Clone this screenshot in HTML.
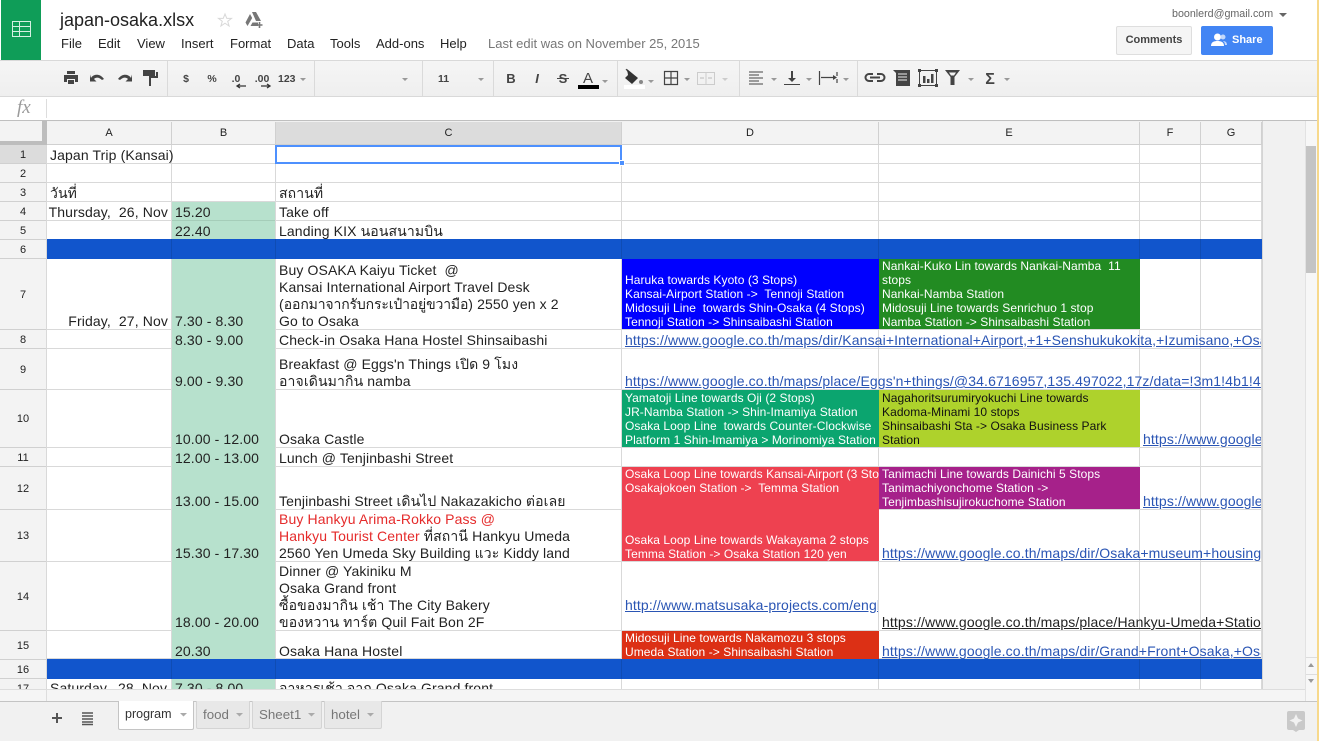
<!DOCTYPE html>
<html><head><meta charset="utf-8"><title>japan-osaka.xlsx</title>
<style>
html,body{margin:0;padding:0;width:1319px;height:741px;overflow:hidden;background:#fff;font-family:"Liberation Sans",Arial,"Noto Sans CJK SC",sans-serif}
div{position:absolute;box-sizing:border-box}
.a{white-space:pre}
#grid{left:0;top:145px;width:1262px;height:544px;overflow:hidden;background:#fff}
#g{left:0;top:-145px;width:1262px;height:741px}
.v{top:145px;width:1px;height:544px;background:#d9d9d9}
.h{left:47px;width:1215px;height:1px;background:#d9d9d9}
.t{font-size:14px;letter-spacing:.12px;line-height:17px;color:#222;white-space:pre;overflow:visible}
.s{font-size:12px;letter-spacing:.07px;line-height:14px;color:#fff;white-space:pre;overflow:hidden;padding-left:3px}
.r{text-align:right;width:122px;left:46px}
.l{font-size:14px;letter-spacing:.12px;line-height:17px;color:#2a55b4;text-decoration:underline;white-space:pre;overflow:hidden}
.rh{left:0;width:46px;background:#f3f3f3;border-bottom:1px solid #d0d0d0;font-size:11px;color:#222;text-align:center;display:flex;align-items:center;justify-content:center;padding-top:1px}
.ch{top:122px;height:23px;background:#f3f3f3;border-right:1px solid #d0d0d0;border-bottom:1px solid #d0d0d0;font-size:11px;color:#222;text-align:center;line-height:22px}
.tab{top:701px;height:28px;background:#e8e8e8;border:1px solid #d4d4d4;border-top:0;border-radius:0 0 2px 2px;font-size:13.33px;color:#777;line-height:27px;padding-left:6px}
.m{top:36px;font-size:13px;line-height:16px;color:#222;white-space:pre}
</style></head><body>

<!-- header -->
<div style="left:1px;top:0;width:40px;height:60px;background:#0f9d58"></div>
<svg style="position:absolute;left:12px;top:21px" width="20" height="17"><rect x=".5" y=".5" width="18" height="15" fill="none" stroke="#d5f0e2"/><path d="M1 5.500h18M1 10.500h18M7.500 1v15" stroke="#d5f0e2" fill="none"/></svg>
<div class="a" style="left:60px;top:9px;font-size:18px;line-height:22px;color:#222">japan-osaka.xlsx</div>
<svg style="position:absolute;left:216px;top:10px" width="48" height="20"><path d="M9 4l1.800 4.400h4.700l-3.800 2.900 1.400 4.700L9 13.200 4.900 16l1.400-4.700-3.800-2.900h4.700z" fill="none" stroke="#d8d8d8"/><path d="M36 2h4l5 9h-5zM34 4l2.200 4-4.700 8-2-3.500zM34.500 16l2-3.500h5.500v3.500z" fill="#777"/><path d="M43.500 12v6M40.500 15h6" stroke="#777" stroke-width="1.600"/></svg>
<div class="m" style="left:61px">File</div><div class="m" style="left:98px">Edit</div><div class="m" style="left:137px">View</div><div class="m" style="left:181px">Insert</div><div class="m" style="left:230px">Format</div><div class="m" style="left:287px">Data</div><div class="m" style="left:330px">Tools</div><div class="m" style="left:376px">Add-ons</div><div class="m" style="left:440px">Help</div>
<div class="m" style="left:488px;color:#777">Last edit was on November 25, 2015</div>
<div class="a" style="left:1172px;top:8px;font-size:10.7px;line-height:13px;color:#666">boonlerd@gmail.com</div>
<svg style="position:absolute;left:1279px;top:12px" width="9" height="6"><path d="M0 1h8L4 5z" fill="#666"/></svg>
<div style="left:1116px;top:26px;width:76px;height:29px;background:#f5f5f5;border:1px solid #dedede;border-radius:2px;font-size:11px;font-weight:bold;color:#444;text-align:center;line-height:27px">Comments</div>
<div style="left:1201px;top:26px;width:72px;height:29px;background:#4285f4;border-radius:2px;font-size:11px;font-weight:bold;color:#fff;line-height:28px;padding-left:31px">Share</div>
<svg style="position:absolute;left:1210px;top:32px" width="18" height="16"><circle cx="7.500" cy="5" r="3.500" fill="#fff"/><path d="M1 14c0-4 3-5 6.500-5s6.500 1 6.500 5z" fill="#fff"/><circle cx="13" cy="5" r="2.500" fill="#c3d8fb"/><path d="M13 9c2 0 4 1 4 4h-2c0-2-1-3-2-4z" fill="#c3d8fb"/></svg>

<!-- toolbar -->
<div style="left:0;top:60px;width:1317px;height:37px;background:linear-gradient(#f5f5f5,#efefef);border-top:1px solid #d9d9d9;border-bottom:1px solid #d9d9d9"></div>
<svg style="position:absolute;left:0;top:60px" width="1317" height="37" font-family="Liberation Sans,Arial,sans-serif">
<g stroke="#dadada"><path d="M167.500 1v35M314.500 1v35M422.500 1v35M493.500 1v35M617.500 1v35M739.500 1v35M857.500 1v35"/></g>
<g fill="#444">
<path d="M67 11h8v3h-8zM64 15h14v7h-3v-3h-8v3h-3zM68 20h6v4h-6z"/>
<path d="M91 18c2-4 9-5 13 1l-2 1c-3-3-6-3-8-1l2.500 2.500H90v-7z"/>
<path d="M131 18c-2-4-9-5-13 1l2 1c3-3 6-3 8-1l-2.500 2.500H132v-7z"/>
<path d="M143 10h12v6h-12z"/>
<path d="M156 12h2v6h-7v8h-2v-10h7z"/>
</g>
<g fill="#444" font-size="10.500" font-weight="bold" text-anchor="middle">
<text x="186" y="22">$</text><text x="212" y="22">%</text>
<text x="236" y="22">.0</text><text x="262" y="22">.00</text>
</g>
<path d="M237 26h9M240 24l-3 2 3 2" stroke="#333" stroke-width="1.300" fill="none"/>
<path d="M261 26h9M267 24l3 2-3 2" stroke="#333" stroke-width="1.300" fill="none"/>
<text x="278" y="22" font-size="10.500" font-weight="bold" fill="#444">123</text>
<text x="438" y="22" font-size="10.500" font-weight="bold" fill="#444">11</text>
<g fill="#999"><path d="M300 18h6l-3 3zM402 18h6l-3 3zM478 18h6l-3 3zM602 20h6l-3 3zM648 20h6l-3 3zM684 18h6l-3 3zM771 18h6l-3 3zM806 18h6l-3 3zM843 18h6l-3 3zM968 18h6l-3 3zM1004 18h6l-3 3z"/></g>
<path d="M722 18h6l-3 3z" fill="#ccc"/>
<text x="511" y="23" font-size="13" font-weight="bold" fill="#444" text-anchor="middle">B</text>
<text x="537" y="23" font-size="13" font-weight="bold" font-style="italic" fill="#444" text-anchor="middle">I</text>
<text x="563" y="23" font-size="13" font-weight="bold" fill="#444" text-anchor="middle">S</text>
<path d="M557 18.500h12" stroke="#444"/>
<text x="588" y="23" font-size="15" fill="#444" text-anchor="middle">A</text>
<rect x="578" y="25" width="21" height="4" fill="#000"/>
<path d="M627 9l11 9-6 6-7-6 3-3z" fill="#333"/><path d="M626 9l3 4" stroke="#333"/><circle cx="641" cy="22" r="2" fill="#888"/>
<rect x="624" y="25" width="21" height="4" fill="#fff"/>
<path d="M664.500 11.500h13v13h-13zM671 11v14M664 18h14" fill="none" stroke="#444" stroke-width="1.200"/>
<path d="M697.500 12.500h17v12h-17zM706 12v12" fill="none" stroke="#ccc"/><path d="M700 18h4M708 18h4" stroke="#bbb"/>
<path d="M749 12h14M749 15h10M749 18h14M749 21h10M749 24h14" stroke="#444"/>
<path d="M784 24.500h16" stroke="#444"/><path d="M792 11v10" stroke="#444" stroke-width="2"/><path d="M788 18h8l-4 4z" fill="#444"/>
<path d="M819.500 11v14M821 17.500h14M837 12v4M837 19v4" stroke="#444" stroke-width="1.200"/><path d="M833 15l4 2.500-4 2.500z" fill="#444"/>
<path d="M873 14h-4a3.500 3.500 0 000 7h4M877 14h4a3.500 3.500 0 010 7h-4M870 17.500h10" fill="none" stroke="#444" stroke-width="2"/>
<path d="M893 10h17v16h-14v-13z" fill="#444"/><path d="M898 14h9M898 17h9M898 20h9" stroke="#eee"/>
<rect x="919.500" y="10.500" width="17" height="15" fill="none" stroke="#444"/><rect x="918" y="9" width="3" height="3" fill="#444"/><rect x="935" y="9" width="3" height="3" fill="#444"/><rect x="918" y="24" width="3" height="3" fill="#444"/><rect x="935" y="24" width="3" height="3" fill="#444"/><path d="M923 16h2.500v7H923zM927 19h2.500v4H927zM931 14h2.500v9H931z" fill="#444"/>
<path d="M945 10h15l-5.500 7v8h-4v-8zM949 12.500l2 3h3l2-3z" fill="#444" fill-rule="evenodd"/>
<text x="990" y="24" font-size="16" font-weight="bold" fill="#444" text-anchor="middle">Σ</text>
</svg>

<!-- formula bar -->
<div style="left:0;top:97px;width:1317px;height:24px;background:#fff;border-bottom:1px solid #bfbfbf"></div>
<div style="left:46px;top:99px;width:1px;height:19px;background:#ddd"></div>
<div style="left:17px;top:97px;font:italic 19px/22px 'Liberation Serif',serif;color:#9a9a9a">fx</div>

<!-- headers -->
<div style="left:0;top:121px;width:1319px;height:24px;background:#f1f1f1"></div>
<div class="ch" style="left:47px;width:125px">A</div>
<div class="ch" style="left:172px;width:104px">B</div>
<div class="ch" style="left:276px;width:346px;background:#dcdcdc">C</div>
<div class="ch" style="left:622px;width:257px">D</div>
<div class="ch" style="left:879px;width:261px">E</div>
<div class="ch" style="left:1140px;width:61px">F</div>
<div class="ch" style="left:1201px;width:61px">G</div>
<div style="left:0;top:121px;width:47px;height:24px;background:#f3f3f3"></div>
<div style="left:42px;top:121px;width:5px;height:24px;background:#bdbdbd"></div>
<div style="left:0;top:141px;width:47px;height:4px;background:#bdbdbd"></div>

<!-- right grey area -->
<div style="left:1262px;top:121px;width:44px;height:581px;background:#f1f1f1;border-left:1px solid #d4d4d4"></div>

<!-- grid -->
<div id="grid"><div id="g">
<div class="rh" style="top:145px;height:19px;background:#dcdcdc">1</div>
<div class="rh" style="top:164px;height:19px">2</div>
<div class="rh" style="top:183px;height:19px">3</div>
<div class="rh" style="top:202px;height:19px">4</div>
<div class="rh" style="top:221px;height:19px">5</div>
<div class="rh" style="top:240px;height:19px">6</div>
<div class="rh" style="top:259px;height:71px">7</div>
<div class="rh" style="top:330px;height:19px">8</div>
<div class="rh" style="top:349px;height:41px">9</div>
<div class="rh" style="top:390px;height:58px">10</div>
<div class="rh" style="top:448px;height:19px">11</div>
<div class="rh" style="top:467px;height:43px">12</div>
<div class="rh" style="top:510px;height:52px">13</div>
<div class="rh" style="top:562px;height:69px">14</div>
<div class="rh" style="top:631px;height:29px">15</div>
<div class="rh" style="top:660px;height:19px">16</div>
<div class="rh" style="top:679px;height:19px">17</div>

<div class="v" style="left:46px"></div><div class="v" style="left:171px"></div><div class="v" style="left:275px"></div><div class="v" style="left:621px"></div><div class="v" style="left:878px"></div><div class="v" style="left:1139px"></div><div class="v" style="left:1200px"></div><div class="v" style="left:1261px"></div>
<div class="h" style="top:163px"></div><div class="h" style="top:182px"></div><div class="h" style="top:201px"></div><div class="h" style="top:220px"></div><div class="h" style="top:239px"></div><div class="h" style="top:258px"></div><div class="h" style="top:329px"></div><div class="h" style="top:348px"></div><div class="h" style="top:389px"></div><div class="h" style="top:447px"></div><div class="h" style="top:466px"></div><div class="h" style="top:509px"></div><div class="h" style="top:561px"></div><div class="h" style="top:630px"></div><div class="h" style="top:658px"></div><div class="h" style="top:678px"></div>

<!-- fills -->
<div style="left:172px;top:202px;width:103px;height:37px;background:#b7e1cd"></div>
<div style="left:172px;top:220px;width:103px;height:1px;background:#a5cdb9"></div>
<div style="left:172px;top:259px;width:103px;height:400px;background:#b7e1cd"></div>
<div style="left:172px;top:679px;width:103px;height:12px;background:#b7e1cd"></div>
<div style="left:47px;top:239px;width:1215px;height:20px;background:#1155cc"></div>
<div style="left:47px;top:659px;width:1215px;height:20px;background:#1155cc"></div>
<div style="left:171px;top:239px;width:1px;height:20px;background:#0f4cb4"></div><div style="left:275px;top:239px;width:1px;height:20px;background:#0f4cb4"></div><div style="left:621px;top:239px;width:1px;height:20px;background:#0f4cb4"></div><div style="left:878px;top:239px;width:1px;height:20px;background:#0f4cb4"></div><div style="left:1139px;top:239px;width:1px;height:20px;background:#0f4cb4"></div><div style="left:1200px;top:239px;width:1px;height:20px;background:#0f4cb4"></div>
<div style="left:171px;top:659px;width:1px;height:20px;background:#0f4cb4"></div><div style="left:275px;top:659px;width:1px;height:20px;background:#0f4cb4"></div><div style="left:621px;top:659px;width:1px;height:20px;background:#0f4cb4"></div><div style="left:878px;top:659px;width:1px;height:20px;background:#0f4cb4"></div><div style="left:1139px;top:659px;width:1px;height:20px;background:#0f4cb4"></div><div style="left:1200px;top:659px;width:1px;height:20px;background:#0f4cb4"></div>

<!-- selection -->
<div style="left:275px;top:145px;width:347px;height:19px;border:2px solid #4d90fe"></div>
<div style="left:619px;top:160px;width:6px;height:6px;background:#4d90fe;border:1px solid #fff"></div>

<!-- A/B/C text -->
<div class="t" style="left:50px;top:147px">Japan Trip (Kansai)</div>
<div class="t" style="left:50px;top:185px">วันที่</div>
<div class="t" style="left:279px;top:185px">สถานที่</div>
<div class="t r" style="top:204px">Thursday,  26, Nov</div>
<div class="t" style="left:175px;top:204px">15.20</div>
<div class="t" style="left:279px;top:204px">Take off</div>
<div class="t" style="left:175px;top:223px">22.40</div>
<div class="t" style="left:279px;top:223px">Landing KIX นอนสนามบิน</div>
<div class="t" style="left:279px;top:262px">Buy OSAKA Kaiyu Ticket  @
Kansai International Airport Travel Desk
(<span style="letter-spacing:-.15px">ออกมาจากรับกระเป๋าอยู่ขวามือ</span>) 2550 yen x 2
Go to Osaka</div>
<div class="t r" style="top:313px">Friday,  27, Nov</div>
<div class="t" style="left:175px;top:313px">7.30 - 8.30</div>
<div class="t" style="left:175px;top:332px">8.30 - 9.00</div>
<div class="t" style="left:279px;top:332px">Check-in Osaka Hana Hostel Shinsaibashi</div>
<div class="t" style="left:279px;top:356px">Breakfast @ Eggs'n Things เปิด 9 โมง
อาจเดินมากิน namba</div>
<div class="t" style="left:175px;top:373px">9.00 - 9.30</div>
<div class="t" style="left:175px;top:431px">10.00 - 12.00</div>
<div class="t" style="left:279px;top:431px">Osaka Castle</div>
<div class="t" style="left:175px;top:450px">12.00 - 13.00</div>
<div class="t" style="left:279px;top:450px">Lunch @ Tenjinbashi Street</div>
<div class="t" style="left:175px;top:493px">13.00 - 15.00</div>
<div class="t" style="left:279px;top:493px">Tenjinbashi Street เดินไป Nakazakicho ต่อเลย</div>
<div class="t" style="left:279px;top:511px"><span style="color:#e52b2b">Buy Hankyu Arima-Rokko Pass @
Hankyu Tourist Center</span> ที่สถานี Hankyu Umeda
2560 Yen Umeda Sky Building แวะ Kiddy land</div>
<div class="t" style="left:175px;top:545px">15.30 - 17.30</div>
<div class="t" style="left:279px;top:563px">Dinner @ Yakiniku M
Osaka Grand front
ซื้อของมากิน เช้า The City Bakery
ของหวาน ทาร์ต Quil Fait Bon 2F</div>
<div class="t" style="left:175px;top:614px">18.00 - 20.00</div>
<div class="t" style="left:175px;top:643px">20.30</div>
<div class="t" style="left:279px;top:643px">Osaka Hana Hostel</div>
<div class="t" style="left:50px;top:680px">Saturday,  28, Nov</div>
<div class="t" style="left:175px;top:680px">7.30 - 8.00</div>
<div class="t" style="left:279px;top:680px">อาหารเช้า จาก Osaka Grand front</div>

<!-- coloured D/E -->
<div class="s" style="left:622px;top:259px;width:257px;height:70px;background:#0000ff;padding-top:14px">Haruka towards Kyoto (3 Stops)
Kansai-Airport Station -&gt;  Tennoji Station
Midosuji Line  towards Shin-Osaka (4 Stops)
Tennoji Station -&gt; Shinsaibashi Station</div>
<div class="s" style="left:879px;top:259px;width:261px;height:70px;background:#228b22">Nankai-Kuko Lin towards Nankai-Namba  11
stops
Nankai-Namba Station
Midosuji Line towards Senrichuo 1 stop
Namba Station -&gt; Shinsaibashi Station</div>
<div class="s" style="left:622px;top:390px;width:257px;height:57px;background:#0ba56f;padding-top:1px">Yamatoji Line towards Oji (2 Stops)
JR-Namba Station -&gt; Shin-Imamiya Station
Osaka Loop Line  towards Counter-Clockwise
Platform 1 Shin-Imamiya &gt; Morinomiya Station</div>
<div class="s" style="left:879px;top:390px;width:261px;height:57px;background:#aed22c;color:#111;padding-top:1px">Nagahoritsurumiryokuchi Line towards
Kadoma-Minami 10 stops
Shinsaibashi Sta -&gt; Osaka Business Park
Station</div>
<div class="s" style="left:622px;top:467px;width:257px;height:42px;background:#ee4150">Osaka Loop Line towards Kansai-Airport (3 Stops)
Osakajokoen Station -&gt;  Temma Station</div>
<div class="s" style="left:879px;top:467px;width:261px;height:42px;background:#a6218a">Tanimachi Line towards Dainichi 5 Stops
Tanimachiyonchome Station -&gt;
Tenjimbashisujirokuchome Station</div>
<div class="s" style="left:622px;top:509px;width:257px;height:52px;background:#ee4150;padding-top:24px">Osaka Loop Line towards Wakayama 2 stops
Temma Station -&gt; Osaka Station 120 yen</div>
<div class="s" style="left:622px;top:631px;width:257px;height:28px;background:#dc3015">Midosuji Line towards Nakamozu 3 stops
Umeda Station -&gt; Shinsaibashi Station</div>

<!-- links -->
<div class="l" style="left:625px;top:332px;width:636px">https://www.google.co.th/maps/dir/Kansai+International+Airport,+1+Senshukukokita,+Izumisano,+Osaka+Prefecture</div>
<div class="l" style="left:625px;top:373px;width:636px">https://www.google.co.th/maps/place/Eggs'n+things/@34.6716957,135.497022,17z/data=!3m1!4b1!4m2!3m1</div>
<div class="l" style="left:1143px;top:431px;width:118px">https://www.google.co.th/maps</div>
<div class="l" style="left:1143px;top:493px;width:118px">https://www.google.co.th/maps</div>
<div class="l" style="left:882px;top:545px;width:379px">https://www.google.co.th/maps/dir/Osaka+museum+housing+and+living</div>
<div class="l" style="left:625px;top:597px;width:253px">http://www.matsusaka-projects.com/english/index.html</div>
<div class="l" style="left:882px;top:614px;width:379px;color:#222">https://www.google.co.th/maps/place/Hankyu-Umeda+Station/@34.7</div>
<div class="l" style="left:882px;top:643px;width:379px">https://www.google.co.th/maps/dir/Grand+Front+Osaka,+Osaka/Shinsaibashi</div>
</div></div>

<!-- bottom of grid -->
<div style="left:0;top:689px;width:1306px;height:12px;background:#f5f5f5;border-top:1px solid #ddd"></div>
<div style="left:46px;top:689px;width:1px;height:12px;background:#ddd"></div>

<!-- scrollbar -->
<div style="left:1305px;top:121px;width:12px;height:580px;background:#f7f7f7;border-left:1px solid #e2e2e2"></div>
<div style="left:1306px;top:146px;width:10px;height:127px;background:#c4c4c4"></div>
<div style="left:1306px;top:657px;width:11px;height:1px;background:#ddd"></div>
<div style="left:1306px;top:674px;width:11px;height:1px;background:#ddd"></div>
<svg style="position:absolute;left:1307px;top:660px" width="9" height="28"><path d="M1 7h6L4 3zM1 19h6l-3 4z" fill="#999"/></svg>

<!-- tabs -->
<div style="left:0;top:701px;width:1317px;height:40px;background:#f1f1f1;border-top:1px solid #c4c4c4"></div>
<svg style="position:absolute;left:50px;top:710px" width="50" height="16"><path d="M7 3v10M2 8h10" stroke="#555" stroke-width="2"/><path d="M32 3h11M32 6h11M32 9h11M32 12h11M32 14.500h11" stroke="#555" stroke-width="1.500"/></svg>
<div class="tab" style="left:118px;width:76px;background:#fff;color:#333;border-color:#c4c4c4;height:29px;font-size:12.5px">program</div>
<div class="tab" style="left:196px;width:54px">food</div>
<div class="tab" style="left:252px;width:70px">Sheet1</div>
<div class="tab" style="left:324px;width:58px">hotel</div>
<svg style="position:absolute;left:118px;top:710px" width="264" height="10"><path d="M62 3h7l-3.500 3.500zM118 3h7l-3.500 3.500zM190 3h7l-3.500 3.500zM249 3h7l-3.500 3.500z" fill="#aaa"/></svg>

<!-- explore icon -->
<svg style="position:absolute;left:1287px;top:711px" width="19" height="22"><path d="M2 0h14a2 2 0 012 2v15a2 2 0 01-2 2h-4l-3 2-3-2H2a2 2 0 01-2-2V2a2 2 0 012-2z" fill="#c9c9c9"/><path d="M9 3l2 4.500L15.500 9.500 11 11.500 9 16 7 11.500 2.500 9.500 7 7.500z" fill="#f1f1f1"/></svg>

<!-- right stripe -->
<div style="left:1317px;top:0;width:2px;height:741px;background:#f7d98c"></div>
</body></html>
